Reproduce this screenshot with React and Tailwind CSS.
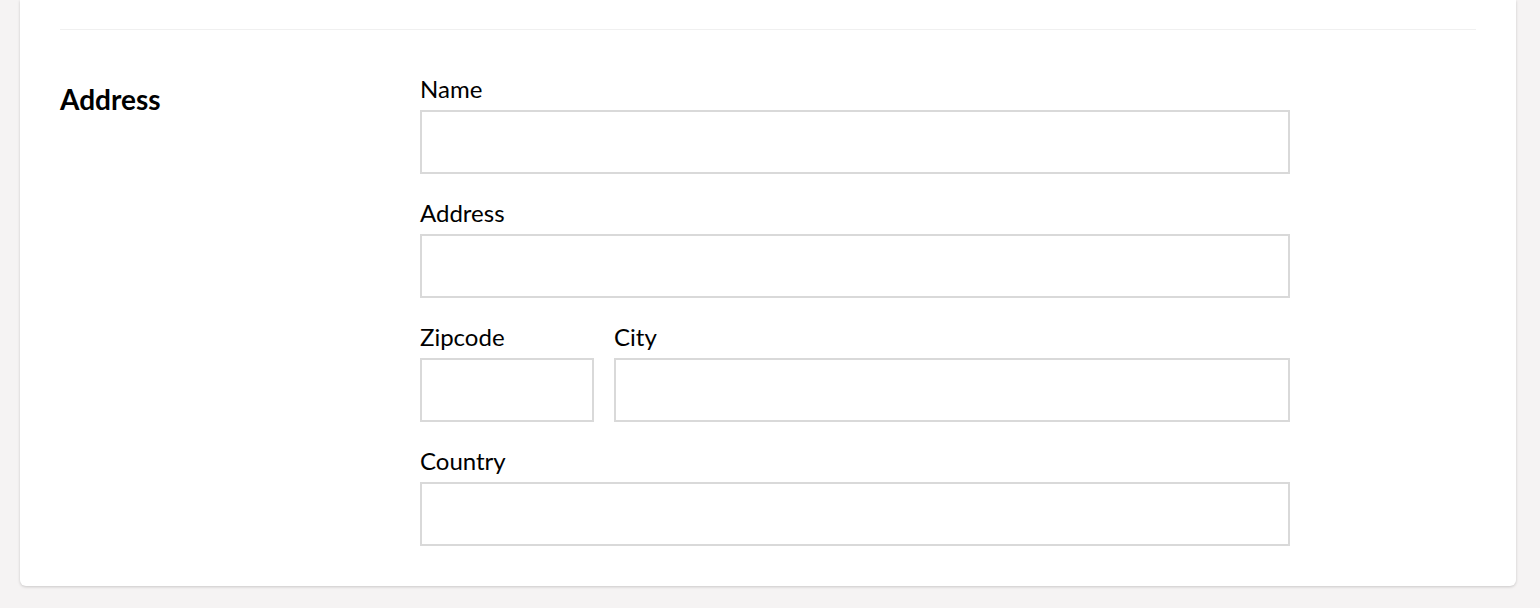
export default function App() {
  const input = "block h-16 w-full border-2 border-[#d9d9d9] bg-white outline-none";
  const label = "block text-[24px] leading-[26px] mb-2 text-black";
  return (
    <div className="min-h-[608px] bg-[#f5f3f3] pl-5 pr-6" style={{ fontFamily: "Lato, 'Noto Sans', sans-serif" }}>
      <div className="bg-white rounded-b-md shadow-[0_1px_3px_rgba(0,0,0,0.18)] px-10 pb-10">
        <div className="h-[29px]" />
        <div className="h-px bg-[#f0f0f0]" />
        <div className="flex pt-[46px]">
          <div className="w-[360px] shrink-0">
            <h2 className="text-[28px] font-bold leading-8 mt-[7px] text-black">Address</h2>
          </div>
          <div className="w-[870px] flex flex-col gap-[26px]">
            <div>
              <label className={label}>Name</label>
              <input className={input} />
            </div>
            <div>
              <label className={label}>Address</label>
              <input className={input} />
            </div>
            <div className="flex gap-5">
              <div className="w-[174px] shrink-0">
                <label className={label}>Zipcode</label>
                <input className={input} />
              </div>
              <div className="flex-1">
                <label className={label}>City</label>
                <input className={input} />
              </div>
            </div>
            <div>
              <label className={label}>Country</label>
              <input className={input} />
            </div>
          </div>
        </div>
      </div>
    </div>
  );
}
